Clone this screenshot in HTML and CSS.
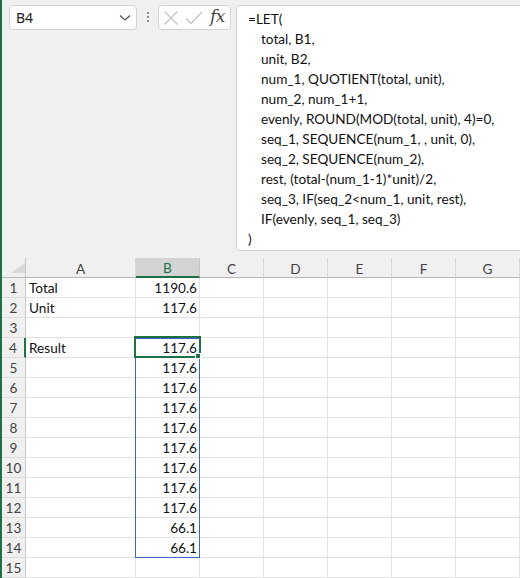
FILE: index.html
```html
<!DOCTYPE html>
<html>
<head>
<meta charset="utf-8">
<link rel="stylesheet" href="styles.css">
</head>
<body>
<div class="app">
  <div class="bar">
    <div class="namebox">
      <span class="name">B4</span>
      <svg class="chev" width="12" height="8" viewBox="0 0 12 8"><polyline points="1,1.5 6,6 11,1.5" fill="none" stroke="#555" stroke-width="1.3"/></svg>
    </div>
    <div class="dots"><i></i><i></i><i></i></div>
    <div class="fxbox">
      <svg width="16" height="16" viewBox="0 0 16 16"><path d="M1.5 1.5 L14.5 14.5 M14.5 1.5 L1.5 14.5" stroke="#c4c4c4" stroke-width="1.3" fill="none"/></svg>
      <svg width="18" height="16" viewBox="0 0 18 16"><polyline points="1,8.5 6,13.5 17,2" stroke="#c4c4c4" stroke-width="1.3" fill="none"/></svg>
      <span class="fx">fx</span>
    </div>
    <div class="formula">
      <div>=LET(</div>
      <div class="in">total, B1,</div>
      <div class="in">unit, B2,</div>
      <div class="in">num_1, QUOTIENT(total, unit),</div>
      <div class="in">num_2, num_1+1,</div>
      <div class="in">evenly, ROUND(MOD(total, unit), 4)=0,</div>
      <div class="in">seq_1, SEQUENCE(num_1, , unit, 0),</div>
      <div class="in">seq_2, SEQUENCE(num_2),</div>
      <div class="in">rest, (total-(num_1-1)*unit)/2,</div>
      <div class="in">seq_3, IF(seq_2&lt;num_1, unit, rest),</div>
      <div class="in">IF(evenly, seq_1, seq_3)</div>
      <div>)</div>
    </div>
  </div>
  <div class="grid">
    <div class="hd corner"><svg width="14" height="10" viewBox="0 0 14 10"><polygon points="14,0 14,10 0,10" fill="#d9d9d9"/></svg></div>
    <div class="hd col">A</div><div class="hd col sel">B</div><div class="hd col">C</div><div class="hd col">D</div><div class="hd col">E</div><div class="hd col">F</div><div class="hd col">G</div>

    <div class="hd row">1</div><div class="c">Total</div><div class="c n">1190.6</div><div class="c"></div><div class="c"></div><div class="c"></div><div class="c"></div><div class="c"></div>
    <div class="hd row">2</div><div class="c">Unit</div><div class="c n">117.6</div><div class="c"></div><div class="c"></div><div class="c"></div><div class="c"></div><div class="c"></div>
    <div class="hd row">3</div><div class="c"></div><div class="c n"></div><div class="c"></div><div class="c"></div><div class="c"></div><div class="c"></div><div class="c"></div>
    <div class="hd row rsel">4</div><div class="c">Result</div><div class="c n active">117.6<span class="spill"></span><span class="cursor"></span><span class="handle"></span></div><div class="c"></div><div class="c"></div><div class="c"></div><div class="c"></div><div class="c"></div>
    <div class="hd row">5</div><div class="c"></div><div class="c n">117.6</div><div class="c"></div><div class="c"></div><div class="c"></div><div class="c"></div><div class="c"></div>
    <div class="hd row">6</div><div class="c"></div><div class="c n">117.6</div><div class="c"></div><div class="c"></div><div class="c"></div><div class="c"></div><div class="c"></div>
    <div class="hd row">7</div><div class="c"></div><div class="c n">117.6</div><div class="c"></div><div class="c"></div><div class="c"></div><div class="c"></div><div class="c"></div>
    <div class="hd row">8</div><div class="c"></div><div class="c n">117.6</div><div class="c"></div><div class="c"></div><div class="c"></div><div class="c"></div><div class="c"></div>
    <div class="hd row">9</div><div class="c"></div><div class="c n">117.6</div><div class="c"></div><div class="c"></div><div class="c"></div><div class="c"></div><div class="c"></div>
    <div class="hd row">10</div><div class="c"></div><div class="c n">117.6</div><div class="c"></div><div class="c"></div><div class="c"></div><div class="c"></div><div class="c"></div>
    <div class="hd row">11</div><div class="c"></div><div class="c n">117.6</div><div class="c"></div><div class="c"></div><div class="c"></div><div class="c"></div><div class="c"></div>
    <div class="hd row">12</div><div class="c"></div><div class="c n">117.6</div><div class="c"></div><div class="c"></div><div class="c"></div><div class="c"></div><div class="c"></div>
    <div class="hd row">13</div><div class="c"></div><div class="c n">66.1</div><div class="c"></div><div class="c"></div><div class="c"></div><div class="c"></div><div class="c"></div>
    <div class="hd row">14</div><div class="c"></div><div class="c n">66.1</div><div class="c"></div><div class="c"></div><div class="c"></div><div class="c"></div><div class="c"></div>
    <div class="hd row">15</div><div class="c"></div><div class="c n"></div><div class="c"></div><div class="c"></div><div class="c"></div><div class="c"></div><div class="c"></div>
  </div>
</div>
</body>
</html>
```

FILE: styles.css
```css
* { box-sizing: border-box; }
html, body { margin: 0; padding: 0; }
body { width: 520px; height: 578px; overflow: hidden; background: #f0f0f0; }
.app {
  border-left: 2px solid #1e7145;
  height: 578px;
  font-family: Lato, "Liberation Sans", sans-serif;
  font-size: 13.6px;
  color: #111;
}
.bar {
  height: 258px;
  display: flex;
  align-items: flex-start;
  padding: 5px 0 0 7px;
  background: #f0f0f0;
}
.namebox {
  width: 128px;
  height: 25px;
  background: #fff;
  border: 1px solid #d4d4d4;
  border-radius: 4px;
  display: flex;
  align-items: center;
  justify-content: space-between;
  padding: 0 5px 0 6px;
}
.name { font-family: "Noto Sans", sans-serif; font-size: 14px; color: #222; }
.chev { margin-top: 1px; }
.dots {
  width: 21px;
  display: flex;
  flex-direction: column;
  align-items: center;
  gap: 2px;
  padding-top: 7px;
}
.dots i { display: block; width: 2px; height: 2px; background: #8a8a8a; }
.fxbox {
  width: 73px;
  height: 25px;
  background: #fff;
  border: 1px solid #d4d4d4;
  border-radius: 4px;
  display: flex;
  align-items: center;
  padding-left: 4px;
  gap: 6px;
}
.fx {
  font-family: "DejaVu Serif", "Liberation Serif", serif;
  font-style: italic;
  font-size: 17px;
  color: #444;
  margin-left: 1px;
  margin-top: -3px;
  letter-spacing: -0.5px;
}
.formula {
  flex: 1;
  margin-left: 5px;
  margin-right: -8px;
  height: 246px;
  background: #fff;
  border: 1px solid #d4d4d4;
  border-radius: 4px;
  padding: 3px 0 0 11px;
  line-height: 20px;
  white-space: nowrap;
}
.formula .in { padding-left: 13px; }
.grid {
  display: grid;
  grid-template-columns: 24px 110px 64px 64px 64px 64px 64px 64px;
  grid-auto-rows: 20px;
  background: #fff;
}
.hd {
  background: #f0f0f0;
  color: #444;
  display: flex;
  align-items: center;
  justify-content: center;
}
.corner {
  border-right: 1px solid #c8c8c8;
  border-bottom: 1px solid #b8b8b8;
  align-items: flex-end;
  justify-content: flex-end;
  padding: 0 0 4px 0;
}
.col {
  border-right: 1px solid #d6d6d6;
  border-bottom: 1px solid #b8b8b8;
  padding-top: 2px;
}
.col.sel {
  background: #d3d3d3;
  color: #1e7145;
  border-bottom: 2px solid #1e7145;
  border-right-color: #c4c4c4;
}
.row {
  border-right: 1px solid #c8c8c8;
  border-bottom: 1px solid #dcdcdc;
  padding-top: 1px;
}
.row.rsel { border-right: 2px solid #1e7145; }
.c {
  border-right: 1px solid #e1e1e1;
  border-bottom: 1px solid #e1e1e1;
  padding: 1px 2px 0 3px;
  line-height: 19px;
  white-space: nowrap;
}
.c.n { text-align: right; }
.active { position: relative; }
.spill {
  position: absolute;
  left: -1px;
  top: 0;
  width: 65px;
  height: 220px;
  border: 1px solid #3a66c4;
  z-index: 1;
}
.cursor {
  position: absolute;
  top: -2px;
  left: -2px;
  right: -2px;
  bottom: -1px;
  border: 2px solid #1e7145;
  z-index: 2;
}
.handle {
  position: absolute;
  right: -2px;
  bottom: -2px;
  width: 6px;
  height: 6px;
  background: #1e7145;
  border: 1px solid #fff;
  z-index: 3;
}
```
